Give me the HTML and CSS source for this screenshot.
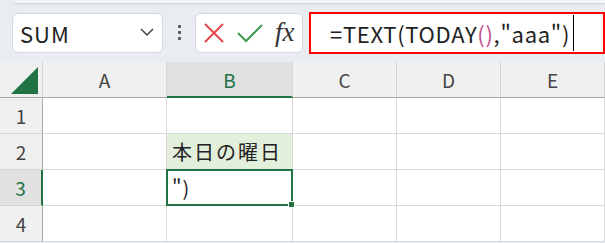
FILE: index.html
```html
<!DOCTYPE html>
<html lang="ja">
<head>
    <meta charset="UTF-8">
    <title>Excel</title>
    <link rel="stylesheet" href="styles.css">
</head>
<body>
    <div class="ribbon-edge"></div>
    <div class="formula-bar">
        <div class="name-box">
            <span>SUM</span>
            <svg class="chevron" width="14" height="9" viewBox="0 0 14 9">
                <polyline points="1,1 7,7 13,1" fill="none" stroke="#444" stroke-width="1.5"/>
            </svg>
        </div>
        <div class="dots">
            <i></i><i></i><i></i>
        </div>
        <div class="buttons">
            <svg width="20" height="20" viewBox="0 0 20 20">
                <path d="M1 1 L19 19 M19 1 L1 19" stroke="#e5484d" stroke-width="2"/>
            </svg>
            <svg width="26" height="20" viewBox="0 0 26 20">
                <polyline points="1,10 9,18 25,2" fill="none" stroke="#3c9a50" stroke-width="2"/>
            </svg>
            <span class="fx">fx</span>
        </div>
        <div class="formula">
            <span>=TEXT(TODAY<span class="paren">()</span>,"aaa")</span><span class="caret"></span>
        </div>
    </div>

    <div class="sheet">
        <div class="corner"><div class="tri"></div></div>
        <div class="col-head">A</div>
        <div class="col-head active">B</div>
        <div class="col-head">C</div>
        <div class="col-head">D</div>
        <div class="col-head">E</div>

        <div class="row-head">1</div>
        <div class="cell"></div><div class="cell"></div><div class="cell"></div><div class="cell"></div><div class="cell"></div>

        <div class="row-head">2</div>
        <div class="cell"></div><div class="cell label">本日の曜日</div><div class="cell"></div><div class="cell"></div><div class="cell"></div>

        <div class="row-head active">3</div>
        <div class="cell"></div><div class="cell selected">")<i class="handle"></i></div><div class="cell"></div><div class="cell"></div><div class="cell"></div>

        <div class="row-head">4</div>
        <div class="cell"></div><div class="cell"></div><div class="cell"></div><div class="cell"></div><div class="cell"></div>
    </div>
</body>
</html>
```

FILE: styles.css
```css
body {
    margin: 0;
    background-color: #e9edf2;
    font-family: "Noto Sans CJK JP", "Noto Sans", sans-serif;
    color: #222;
    overflow: hidden;
}
.ribbon-edge {
    height: 3px;
    margin-left: 14px;
    background-color: #f3f5f8;
    border-bottom-left-radius: 4px;
    box-shadow: 0 1px 2px rgba(0, 0, 0, 0.12);
}
.formula-bar {
    display: flex;
    align-items: center;
    height: 59px;
    padding: 0 0 0 12px;
    box-sizing: border-box;
}
.name-box {
    width: 151px;
    height: 40px;
    box-sizing: border-box;
    background-color: white;
    border: 1px solid #d5d9de;
    border-radius: 6px;
    display: flex;
    align-items: center;
    justify-content: space-between;
    padding: 0 8px 0 7px;
    font-size: 22px;
    letter-spacing: 1px;
    color: #222;
}
.dots {
    width: 32px;
    display: flex;
    flex-direction: column;
    align-items: center;
    gap: 3px;
}
.dots i {
    width: 3px;
    height: 3px;
    background-color: #555;
    border-radius: 1px;
}
.buttons {
    width: 108px;
    height: 40px;
    box-sizing: border-box;
    background-color: white;
    border: 1px solid #d5d9de;
    border-radius: 6px;
    display: flex;
    align-items: center;
    gap: 13px;
    padding-left: 8px;
}
.fx {
    font-family: "Liberation Serif", serif;
    font-style: italic;
    font-size: 27px;
    color: #333;
    margin-left: -1px;
}
.formula {
    margin-left: 6px;
    flex: 1;
    height: 42px;
    box-sizing: border-box;
    border: 2px solid #ff0000;
    background-color: white;
    display: flex;
    align-items: center;
    padding-left: 19px;
    font-size: 22px;
    letter-spacing: 0.7px;
    color: #222;
}
.paren {
    color: #c0508f;
}
.caret {
    width: 1px;
    height: 36px;
    background-color: #000;
    margin-left: 3px;
}
.sheet {
    display: grid;
    grid-template-columns: 43px 124px 126px 104px 104px 1fr;
    grid-template-rows: 36px repeat(4, 36px);
    background-color: white;
}
.corner, .col-head, .row-head {
    background-color: #f0f0f0;
    color: #444;
    font-size: 19px;
    display: flex;
    align-items: center;
    justify-content: center;
    box-sizing: border-box;
}
.corner {
    border-right: 1px solid #d4d4d4;
    border-bottom: 1px solid #a8a8a8;
    position: relative;
}
.tri {
    position: absolute;
    right: 4px;
    bottom: 3px;
    width: 0;
    height: 0;
    border-left: 27px solid transparent;
    border-bottom: 27px solid #217346;
}
.col-head {
    border-right: 1px solid #d4d4d4;
    border-bottom: 1px solid #a8a8a8;
}
.col-head.active {
    background-color: #e1e1e1;
    color: #217346;
    border-bottom: 2px solid #217346;
}
.row-head {
    border-right: 1px solid #a8a8a8;
    border-bottom: 1px solid #d4d4d4;
}
.row-head.active {
    background-color: #e1e1e1;
    color: #217346;
    border-right: 2px solid #217346;
}
.cell {
    border-right: 1px solid #d9d9d9;
    border-bottom: 1px solid #d9d9d9;
    box-sizing: border-box;
    font-size: 20px;
    display: flex;
    align-items: center;
    padding-left: 5px;
}
.cell.label {
    background-color: #e2efda;
    letter-spacing: 2px;
}
.cell.selected {
    position: relative;
    border: 2px solid #217346;
    margin: -1px 0 0 -1px;
    padding-left: 4px;
    letter-spacing: 1px;
}
.handle {
    position: absolute;
    right: -4px;
    bottom: -4px;
    width: 5px;
    height: 5px;
    background-color: #217346;
    border: 1px solid white;
}
```
